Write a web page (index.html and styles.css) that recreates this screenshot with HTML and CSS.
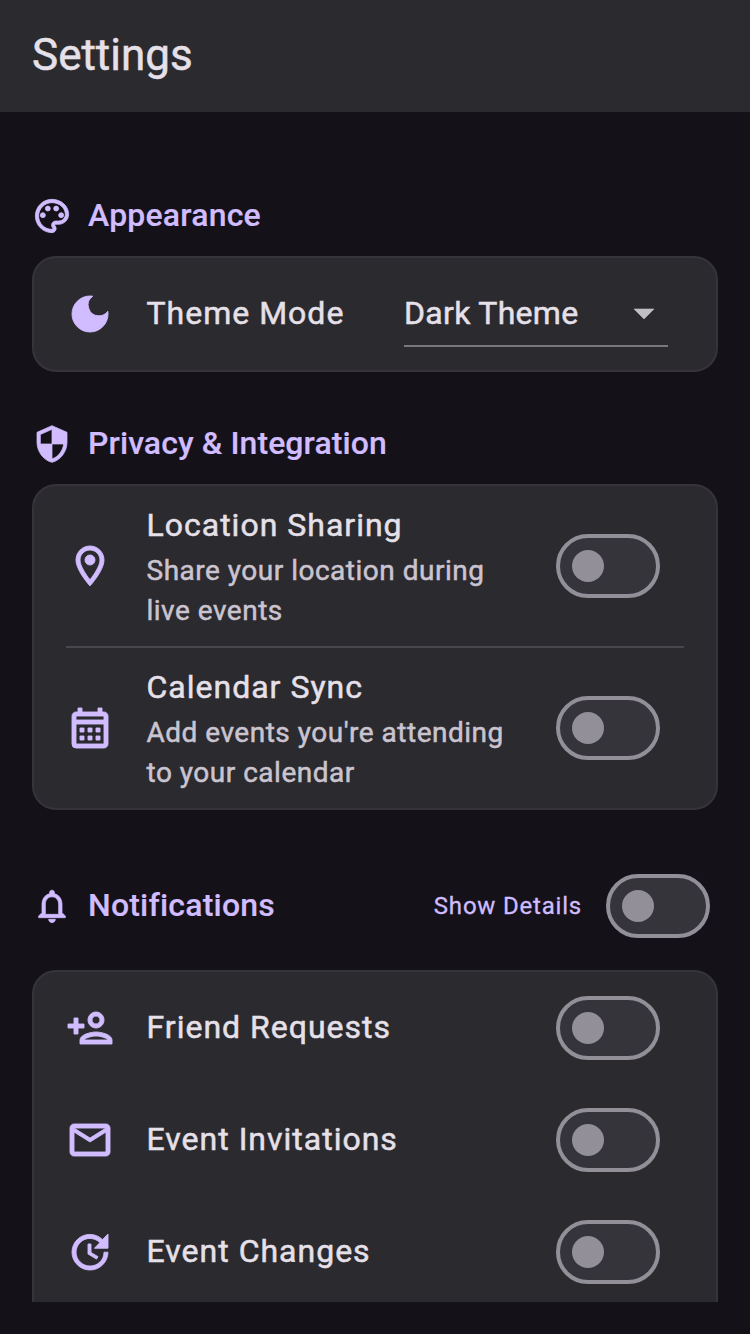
FILE: index.html
```html
<!DOCTYPE html>
<html lang="en">
<head>
<meta charset="utf-8">
<title>Settings</title>
<link rel="stylesheet" href="styles.css">
</head>
<body>
<header class="app-bar"><h1>Settings</h1></header>
<main class="content">
  <section>
    <div class="section-head">
      <svg class="icon-sm" viewBox="0 0 24 24"><path d="M12 22C6.49 22 2 17.51 2 12S6.49 2 12 2s10 4.04 10 9c0 3.31-2.69 6-6 6h-1.77c-.28 0-.5.22-.5.5 0 .12.05.23.13.33.41.47.64 1.06.64 1.67A2.5 2.5 0 0 1 12 22zm0-18c-4.41 0-8 3.59-8 8s3.59 8 8 8c.28 0 .5-.22.5-.5a.54.54 0 0 0-.14-.35c-.41-.46-.63-1.05-.63-1.65a2.5 2.5 0 0 1 2.5-2.5H16c2.21 0 4-1.79 4-4 0-3.86-3.59-7-8-7z"/><circle cx="6.5" cy="11.5" r="1.5"/><circle cx="9.5" cy="7.5" r="1.5"/><circle cx="14.5" cy="7.5" r="1.5"/><circle cx="17.5" cy="11.5" r="1.5"/></svg>
      <h2>Appearance</h2>
    </div>
    <div class="card">
      <div class="row row-theme">
        <svg class="icon" viewBox="0 0 24 24"><path d="M12 3a9 9 0 1 0 9 9c0-.46-.04-.92-.1-1.36a5.389 5.389 0 0 1-4.4 2.26 5.403 5.403 0 0 1-3.14-9.8c-.44-.06-.9-.1-1.36-.1z"/></svg>
        <div class="label"><div class="title">Theme Mode</div></div>
        <div class="dropdown"><span>Dark Theme</span><svg class="arrow" viewBox="0 0 24 24"><path d="M7 10l5 5 5-5z"/></svg></div>
      </div>
    </div>
  </section>

  <section>
    <div class="section-head">
      <svg class="icon-sm" viewBox="0 0 24 24"><path d="M12 1L3 5v6c0 5.55 3.84 10.74 9 12 5.16-1.26 9-6.45 9-12V5l-9-4zm0 10.99h7c-.53 4.12-3.28 7.79-7 8.94V12H5V6.3l7-3.11v8.8z"/></svg>
      <h2 class="privacy">Privacy &amp; Integration</h2>
    </div>
    <div class="card">
      <div class="row row-tall">
        <svg class="icon" viewBox="0 0 24 24"><path d="M12 2C8.13 2 5 5.13 5 9c0 5.25 7 13 7 13s7-7.75 7-13c0-3.87-3.13-7-7-7zM7 9c0-2.76 2.24-5 5-5s5 2.24 5 5c0 2.88-2.88 7.19-5 9.88C9.92 16.21 7 11.85 7 9z"/><circle cx="12" cy="9" r="2.5"/></svg>
        <div class="label"><div class="title">Location Sharing</div><div class="subtitle">Share your location during<br>live events</div></div>
        <div class="switch"></div>
      </div>
      <div class="divider"></div>
      <div class="row row-tall">
        <svg class="icon" viewBox="0 0 24 24"><path d="M19 4h-1V2h-2v2H8V2H6v2H5c-1.11 0-1.99.9-1.99 2L3 20a2 2 0 0 0 2 2h14c1.1 0 2-.9 2-2V6c0-1.1-.9-2-2-2zm0 16H5V10h14v10zm0-12H5V6h14v2zM9 14H7v-2h2v2zm4 0h-2v-2h2v2zm4 0h-2v-2h2v2zm-8 4H7v-2h2v2zm4 0h-2v-2h2v2zm4 0h-2v-2h2v2z"/></svg>
        <div class="label"><div class="title">Calendar Sync</div><div class="subtitle">Add events you're attending<br>to your calendar</div></div>
        <div class="switch"></div>
      </div>
    </div>
  </section>

  <section>
    <div class="section-head section-head-tall">
      <svg class="icon-sm" viewBox="0 0 24 24"><path d="M12 22c1.1 0 2-.9 2-2h-4c0 1.1.9 2 2 2zm6-6v-5c0-3.07-1.63-5.64-4.5-6.32V4c0-.83-.67-1.5-1.5-1.5s-1.5.67-1.5 1.5v.68C7.64 5.36 6 7.92 6 11v5l-2 2v1h16v-1l-2-2zm-2 1H8v-6c0-2.48 1.51-4.5 4-4.5s4 2.02 4 4.5v6z"/></svg>
      <h2>Notifications</h2>
      <span class="details">Show Details</span>
      <div class="switch"></div>
    </div>
    <div class="card card-open">
      <div class="row">
        <svg class="icon" viewBox="0 0 24 24"><path d="M15 12c2.21 0 4-1.79 4-4s-1.79-4-4-4-4 1.79-4 4 1.79 4 4 4zm0-6c1.1 0 2 .9 2 2s-.9 2-2 2-2-.9-2-2 .9-2 2-2zm0 8c-2.67 0-8 1.34-8 4v2h16v-2c0-2.66-5.33-4-8-4zm-6 4c.22-.72 3.31-2 6-2 2.7 0 5.8 1.29 6 2H9zm-3-3v-3h3v-2H6V7H4v3H1v2h3v3z"/></svg>
        <div class="label"><div class="title">Friend Requests</div></div>
        <div class="switch"></div>
      </div>
      <div class="row">
        <svg class="icon" viewBox="0 0 24 24"><path d="M22 6c0-1.1-.9-2-2-2H4c-1.1 0-2 .9-2 2v12c0 1.1.9 2 2 2h16c1.1 0 2-.9 2-2V6zm-2 0l-8 5-8-5h16zm0 12H4V8l8 5 8-5v10z"/></svg>
        <div class="label"><div class="title">Event Invitations</div></div>
        <div class="switch"></div>
      </div>
      <div class="row">
        <svg class="icon" viewBox="0 0 24 24"><path d="M21 10.12h-6.78l2.74-2.82c-2.73-2.7-7.15-2.8-9.88-.1-2.73 2.71-2.73 7.08 0 9.79s7.15 2.71 9.88 0C18.32 15.65 19 14.08 19 12.1h2c0 1.98-.88 4.55-2.64 6.29-3.51 3.48-9.21 3.48-12.72 0-3.5-3.47-3.53-9.11-.02-12.58s9.14-3.47 12.65 0L21 3v7.12zM12.5 8v4.25l3.5 2.08-.72 1.21L11 13V8h1.5z"/></svg>
        <div class="label"><div class="title">Event Changes</div></div>
        <div class="switch"></div>
      </div>
    </div>
  </section>
</main>
</body>
</html>
```

FILE: styles.css
```css
* { box-sizing: border-box; }

body {
  margin: 0;
  height: 1334px;
  overflow: hidden;
  background: #141218;
  color: #e6e0e9;
  font-family: Roboto, "Liberation Sans", sans-serif;
  -webkit-text-stroke: 0.5px currentColor;
}

h1, h2 { margin: 0; }

.app-bar {
  display: flex;
  align-items: center;
  height: 112px;
  padding: 0 32px 2px;
  background: #2b2a2f;
}

.app-bar h1 { font-size: 44px; font-weight: 400; line-height: 56px; }

/* Scroll viewport: its lower edge clips the last card. */
.content {
  display: flex;
  flex-direction: column;
  height: 1190px;
  padding: 80px 32px 0;
  overflow: hidden;
}

section { flex: none; margin-bottom: 48px; }

.section-head {
  display: flex;
  align-items: center;
  gap: 16px;
  height: 64px;
  padding: 0 8px 16px 0;
  color: #d0bcff;
}

.section-head-tall { height: 112px; padding-bottom: 16px; }

.section-head h2 {
  flex: 1;
  padding-bottom: 2px;
  font-size: 32px;
  font-weight: 500;
  line-height: 46px;
  letter-spacing: 0.2px;
  -webkit-text-stroke-width: 0.15px;
}

.section-head .privacy { letter-spacing: 0.08px; }

.details {
  margin-right: 8px;
  font-size: 24px;
  letter-spacing: 0.8px;
  -webkit-text-stroke-width: 0.3px;
}

.icon-sm,
.icon {
  flex: none;
  fill: #d0bcff;
  stroke: #d0bcff;
  stroke-width: 0.45;
}

.icon-sm { width: 40px; height: 40px; }
.icon { width: 48px; height: 48px; }

.card {
  border: 2px solid #36343b;
  border-radius: 24px;
  background: #2b2a2f;
}

/* Continues past the viewport edge. */
.card-open { padding-bottom: 64px; }

.row {
  display: flex;
  align-items: center;
  height: 112px;
  padding: 0 56px 0 32px;
}

.row-theme { padding-right: 48px; }
.row-tall { height: 160px; }

.label { flex: 1; padding-left: 32.5px; }
.row-tall .label { padding-top: 1px; }
.title { padding-bottom: 2px; font-size: 32px; line-height: 46px; letter-spacing: 1px; }
.row-tall .title { padding-bottom: 0; }
.subtitle { padding-top: 3px; color: #cac4d0; font-size: 28px; line-height: 40px; letter-spacing: 0.5px; }

.divider { height: 2px; margin: 0 32px; background: #49474e; }

.dropdown {
  display: flex;
  align-items: center;
  justify-content: space-between;
  width: 264px;
  height: 66px;
  border-bottom: 2px solid #77767a;
  font-size: 32px;
  letter-spacing: 0.3px;
}

.arrow {
  width: 48px;
  height: 48px;
  fill: #bfbfc1;
  stroke: #bfbfc1;
  stroke-width: 0.3;
}

.switch {
  display: flex;
  align-items: center;
  flex: none;
  width: 104px;
  height: 64px;
  padding-left: 12px;
  border: 4px solid #938f99;
  border-radius: 32px;
  background: #36343b;
}

.switch::before {
  content: "";
  width: 32px;
  height: 32px;
  border-radius: 50%;
  background: #938f99;
}
```
